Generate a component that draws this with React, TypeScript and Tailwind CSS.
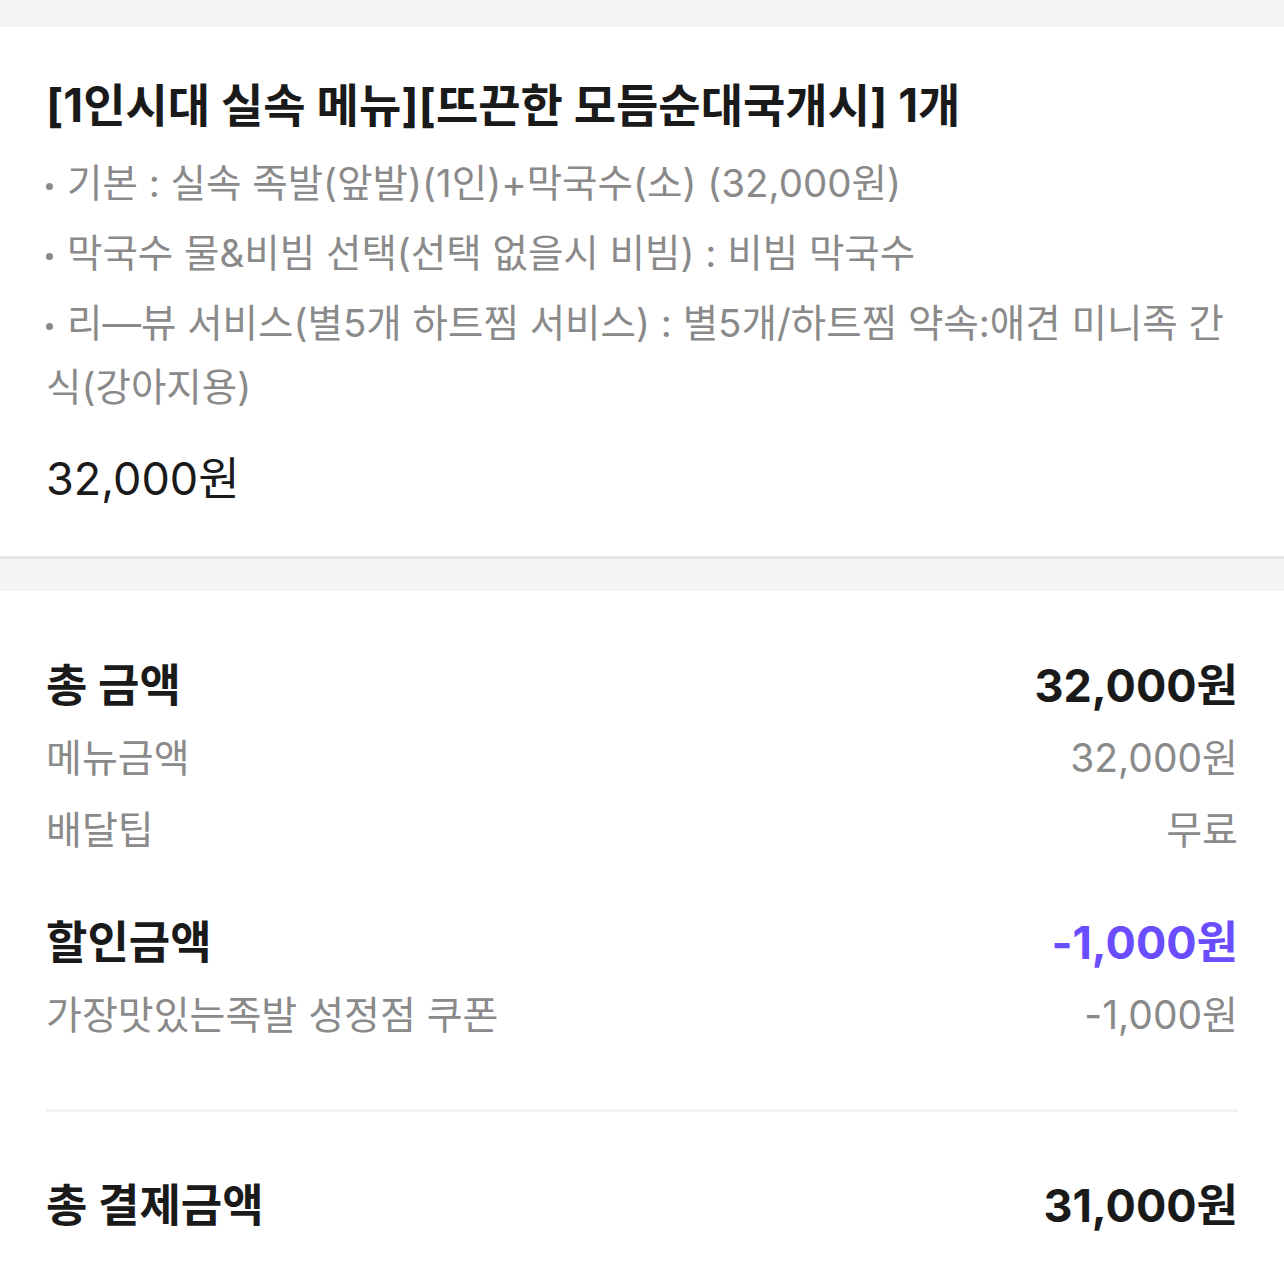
const items = [
  "기본 : 실속 족발(앞발)(1인)+막국수(소) (32,000원)",
  "막국수 물&비빔 선택(선택 없을시 비빔) : 비빔 막국수",
  "리—뷰 서비스(별5개 하트찜 서비스) : 별5개/하트찜 약속:애견 미니족 간식(강아지용)",
];

const Row = ({ label, value, strong, accent }: { label: string; value: string; strong?: boolean; accent?: boolean }) => (
  <div
    className={
      "flex justify-between items-center leading-[72px] " +
      (strong ? "text-[45px] font-bold text-[#1a1a1a]" : "text-[39px] text-[#8a8a8a]")
    }
  >
    <span>{label}</span>
    <span className={accent ? "text-[#6a4dff]" : ""}>{value}</span>
  </div>
);

export default function App() {
  return (
    <div
      className="min-h-screen bg-white"
      style={{ fontFamily: 'Inter, "Noto Sans CJK KR", sans-serif' }}
    >
      <div className="h-[27px] bg-[#f3f4f6]" />

      {/* menu */}
      <div className="px-[46px] pt-[50px] pb-[49px] border-b-[3px] border-[#e4e6e9]">
        <h1 className="text-[46px] font-bold leading-[56px] text-[#1a1a1a]">
          [1인시대 실속 메뉴][뜨끈한 모듬순대국개시] 1개
        </h1>
        <ul className="mt-[18px] flex flex-col gap-[6px] text-[38.5px] leading-[64px] text-[#8a8a8a]">
          {items.map((t) => (
            <li key={t}>
              <span className="inline-block w-[7px] h-[7px] rounded-full bg-[#8a8a8a] align-middle mr-[14px]" />
              {t}
            </li>
          ))}
        </ul>
        <div className="mt-[32px] text-[45px] leading-[56px] text-[#1a1a1a]">32,000원</div>
      </div>

      <div className="h-[32px] bg-[#f3f4f6]" />

      {/* totals */}
      <div className="px-[46px] pt-[59px] pb-[32px]">
        <Row label="총 금액" value="32,000원" strong />
        <Row label="메뉴금액" value="32,000원" />
        <Row label="배달팁" value="무료" />
        <div className="mt-[41px]">
          <Row label="할인금액" value="-1,000원" strong accent />
          <Row label="가장맛있는족발 성정점 쿠폰" value="-1,000원" />
        </div>
        <div className="mt-[58px] h-[3px] bg-[#f3f3f3]" />
        <div className="mt-[58px]">
          <Row label="총 결제금액" value="31,000원" strong />
        </div>
      </div>
    </div>
  );
}
